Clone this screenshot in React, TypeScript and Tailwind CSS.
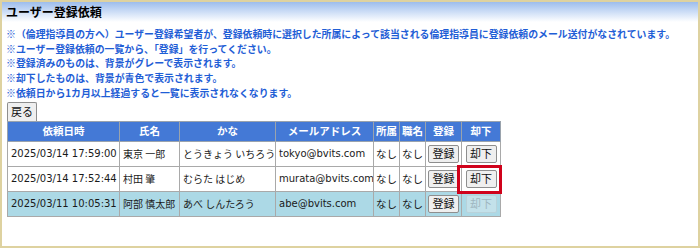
import React from "react";

const jp = { fontFamily: '"Noto Sans CJK JP", "Noto Sans", sans-serif' };
const cell = { fontFamily: '"DejaVu Sans", "Noto Sans CJK JP", sans-serif' };

type Row = { date: string; name: string; kana: string; mail: string; bg: string; disabledReject?: boolean };

const rows: Row[] = [
  { date: "2025/03/14 17:59:00", name: "東京 一郎", kana: "とうきょう いちろう", mail: "tokyo@bvits.com", bg: "bg-white" },
  { date: "2025/03/14 17:52:44", name: "村田 肇", kana: "むらた はじめ", mail: "murata@bvits.com", bg: "bg-white" },
  { date: "2025/03/11 10:05:31", name: "阿部 慎太郎", kana: "あべ しんたろう", mail: "abe@bvits.com", bg: "bg-[#acd9e6]", disabledReject: true },
];

const notes = [
  "※（倫理指導員の方へ）ユーザー登録希望者が、登録依頼時に選択した所属によって該当される倫理指導員に登録依頼のメール送付がなされています。",
  "※ユーザー登録依頼の一覧から、「登録」を行ってください。",
  "※登録済みのものは、背景がグレーで表示されます。",
  "※却下したものは、背景が青色で表示されます。",
  "※依頼日から1カ月以上経過すると一覧に表示されなくなります。",
];

function Btn({ label, disabled }: { label: string; disabled?: boolean }) {
  return (
    <span
      className={
        "inline-flex h-[18px] w-[31px] items-center justify-center rounded-[2px] border text-[11px] " +
        (disabled
          ? "border-[#b9d2da] bg-[#c3e1ea] text-[#9fb6c0]"
          : "border-[#8e8e8e] bg-[#efefef] text-[#111]")
      }
      style={jp}
    >
      {label}
    </span>
  );
}

export default function App() {
  return (
    <div className="relative h-[248px] w-[700px] overflow-hidden border-2 border-[#ded2a0] bg-white">
      <div className="flex h-[20px] items-center bg-gradient-to-b from-[#9dbdec] to-white pl-[4px]">
        <span className="text-[12px] font-bold leading-none text-black" style={jp}>
          ユーザー登録依頼
        </span>
      </div>
      <div className="mt-[5px] pl-[4px] text-[9.9px] font-bold leading-[14.7px] text-[#1f5ed6]" style={jp}>
        {notes.map((n) => (
          <div key={n} className="whitespace-nowrap">{n}</div>
        ))}
      </div>
      <div className="pl-[5px]">
        <div className="mt-[1px] flex">
          <span
            className="inline-flex h-[19px] w-[30px] items-center justify-center rounded-t-[2px] border border-b-0 border-[#8e8e8e] bg-[#efefef] text-[11px] text-[#111]"
            style={jp}
          >
            戻る
          </span>
        </div>
        <div className="relative w-[493px]">
          <table className="w-[493px] table-fixed border-collapse text-[10px] text-[#1a1a1a]" style={cell}>
            <colgroup>
              <col className="w-[112px]" />
              <col className="w-[60px]" />
              <col className="w-[96px]" />
              <col className="w-[98px]" />
              <col className="w-[26px]" />
              <col className="w-[26px]" />
              <col className="w-[36px]" />
              <col className="w-[39px]" />
            </colgroup>
            <thead>
              <tr className="h-[20px] bg-[#4479d6] text-white">
                {["依頼日時", "氏名", "かな", "メールアドレス", "所属", "職名", "登録", "却下"].map((h) => (
                  <th key={h} className="border border-[#9aa3ad] px-0 text-center text-[10.5px] font-bold" style={jp}>
                    {h}
                  </th>
                ))}
              </tr>
            </thead>
            <tbody>
              {rows.map((r) => (
                <tr key={r.date} className={"h-[25px] " + r.bg}>
                  <td className="whitespace-nowrap border border-[#a9a9a9] px-[3px]">{r.date}</td>
                  <td className="whitespace-nowrap border border-[#a9a9a9] px-[3px]" style={jp}>{r.name}</td>
                  <td className="whitespace-nowrap border border-[#a9a9a9] px-[3px]" style={jp}>{r.kana}</td>
                  <td className="overflow-hidden whitespace-nowrap border border-[#a9a9a9] px-[3px]">{r.mail}</td>
                  <td className="whitespace-nowrap border border-[#a9a9a9] px-[2px] text-[10.5px]" style={jp}>なし</td>
                  <td className="whitespace-nowrap border border-[#a9a9a9] px-[2px] text-[10.5px]" style={jp}>なし</td>
                  <td className="border border-[#a9a9a9] text-center"><Btn label="登録" /></td>
                  <td className="border border-[#a9a9a9] text-center"><Btn label="却下" disabled={r.disabledReject} /></td>
                </tr>
              ))}
            </tbody>
          </table>
          <div className="pointer-events-none absolute left-[450px] top-[44px] h-[29px] w-[45px] border-[3px] border-[#d0021b]" />
        </div>
      </div>
    </div>
  );
}
